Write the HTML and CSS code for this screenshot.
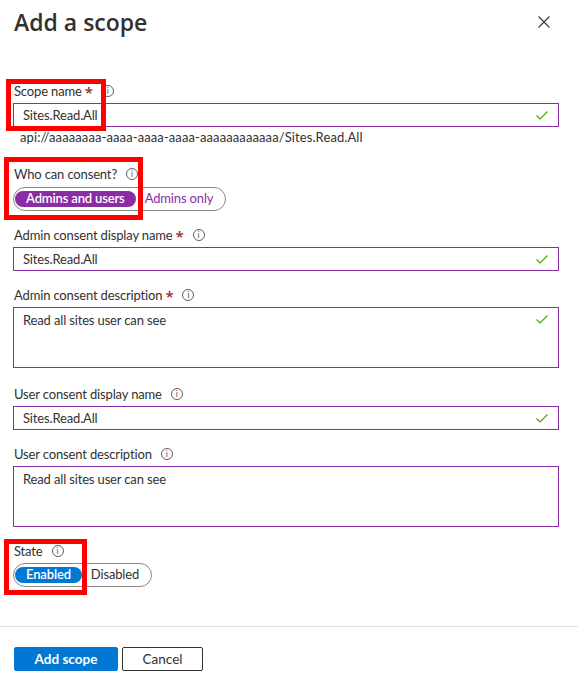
FILE: index.html
```html
<!DOCTYPE html>
<html lang="en">
<head>
<meta charset="utf-8">
<title>Add a scope</title>
<link rel="stylesheet" href="styles.css">
</head>
<body>
<div class="blade">
  <header class="blade-header">
    <h1 class="blade-title">Add a scope</h1>
    <button class="close-btn" aria-label="Close">
      <svg width="12" height="12" viewBox="0 0 12 12"><path d="M0.5 0.5 L11.5 11.5 M11.5 0.5 L0.5 11.5" stroke="#323130" stroke-width="1.1" fill="none"/></svg>
    </button>
  </header>

  <div class="blade-content">
    <div class="field field-scope">
      <div class="label">Scope name <span class="req">*</span><span class="info">i</span></div>
      <div class="input"><span class="value">Sites.Read.All</span><svg class="check" width="12" height="9" viewBox="0 0 12 9"><path d="M0.5 4.5 L4 8 L11.5 0.5" stroke="#57a300" stroke-width="1.2" fill="none"/></svg></div>
      <div class="hint">api://aaaaaaaa-aaaa-aaaa-aaaa-aaaaaaaaaaaa/Sites.Read.All</div>
      <div class="annot annot-scope"></div>
    </div>

    <div class="field field-consent">
      <div class="label">Who can consent? <span class="info">i</span></div>
      <div class="toggle">
        <span class="opt opt-on purple">Admins and users</span><span class="opt opt-off purple-text">Admins only</span>
      </div>
      <div class="annot annot-consent"></div>
    </div>

    <div class="field">
      <div class="label">Admin consent display name <span class="req">*</span><span class="info">i</span></div>
      <div class="input"><span class="value">Sites.Read.All</span><svg class="check" width="12" height="9" viewBox="0 0 12 9"><path d="M0.5 4.5 L4 8 L11.5 0.5" stroke="#57a300" stroke-width="1.2" fill="none"/></svg></div>
    </div>

    <div class="field field-area">
      <div class="label">Admin consent description <span class="req">*</span><span class="info">i</span></div>
      <div class="textarea"><span class="value">Read all sites user can see</span><svg class="check" width="12" height="9" viewBox="0 0 12 9"><path d="M0.5 4.5 L4 8 L11.5 0.5" stroke="#57a300" stroke-width="1.2" fill="none"/></svg></div>
    </div>

    <div class="field">
      <div class="label">User consent display name <span class="info">i</span></div>
      <div class="input"><span class="value">Sites.Read.All</span><svg class="check" width="12" height="9" viewBox="0 0 12 9"><path d="M0.5 4.5 L4 8 L11.5 0.5" stroke="#57a300" stroke-width="1.2" fill="none"/></svg></div>
    </div>

    <div class="field">
      <div class="label">User consent description <span class="info">i</span></div>
      <div class="textarea"><span class="value">Read all sites user can see</span></div>
    </div>

    <div class="field field-state">
      <div class="label">State <span class="info">i</span></div>
      <div class="toggle">
        <span class="opt opt-on blue">Enabled</span><span class="opt opt-off">Disabled</span>
      </div>
      <div class="annot annot-state"></div>
    </div>
  </div>

  <footer class="blade-footer">
    <button class="btn btn-primary">Add scope</button>
    <button class="btn btn-secondary">Cancel</button>
  </footer>
</div>
</body>
</html>
```

FILE: styles.css
```css
* { box-sizing: border-box; }
html, body { margin: 0; padding: 0; background: #fff; }
body {
  font-family: "Segoe UI", Lato, "Open Sans", sans-serif;
  font-size: 13px;
  letter-spacing: -0.15px;
  color: #323130;
  width: 578px;
  height: 688px;
  overflow: hidden;
}
.blade { display: flex; flex-direction: column; height: 688px; }
.blade-header {
  display: flex;
  align-items: center;
  justify-content: space-between;
  padding: 4px 28px 0 14px;
  height: 40px;
}
.blade-title {
  margin: 0;
  font-family: "Segoe UI", "Open Sans", sans-serif;
  font-size: 23px;
  font-weight: 600;
  letter-spacing: 0;
  color: #323130;
  line-height: 32px;
}
.close-btn {
  border: 0; background: none; padding: 0; width: 12px; height: 12px; display: flex;
}
.blade-content {
  flex: 1;
  padding: 41px 19px 0 13px;
  display: flex;
  flex-direction: column;
}
.field { position: relative; display: flex; flex-direction: column; margin-bottom: 14px; }
.field-area { margin-bottom: 16px; }
.label {
  display: flex; align-items: center;
  height: 20px; line-height: 20px;
  margin-bottom: 2px;
  padding-left: 1px;
  white-space: nowrap;
}
.req {
  color: #a4262c; margin-left: 3px;
  font-family: "Open Sans", sans-serif; font-size: 15px; font-weight: 600;
  line-height: 20px; position: relative; top: 1px;
}
.info {
  display: inline-flex; align-items: center; justify-content: center;
  width: 12px; height: 12px;
  margin-left: 9px;
  border: 1px solid #605e5c; border-radius: 50%;
  font-size: 9px; line-height: 1; color: #605e5c; letter-spacing: 0;
  font-family: "DejaVu Sans", sans-serif;
}
.input, .textarea {
  display: flex; justify-content: space-between;
  border: 1px solid #8a2da5;
  padding: 0 10px 0 9px;
  background: #fff;
}
.input { height: 24px; align-items: center; }
.textarea { height: 61px; align-items: flex-start; padding-top: 2px; }
.textarea .check { margin-top: 5px; }
.value { line-height: 20px; }
.hint { padding-left: 7px; line-height: 16px; margin-top: 2px; color: #323130; letter-spacing: 0.1px; }
.field-scope { margin-bottom: 19px; }
.field-consent .label { margin-bottom: 3px; }
.toggle {
  align-self: flex-start;
  display: flex; align-items: center;
  height: 24px;
  border: 1px solid #8a8886; border-radius: 12px;
  padding: 0 1px;
}
.opt { height: 16px; line-height: 15px; border-radius: 8px; padding: 0 11px; white-space: nowrap; }
.opt-on { color: #fff; font-weight: 600; }
.purple { background: #8a2da5; }
.blue { background: #0078d4; }
.purple-text { color: #8a2da5; }
.opt-off { padding: 0 11px 0 9px; }
.annot {
  position: absolute;
  border: 5px solid #ff0000;
  pointer-events: none;
}
.annot-scope { left: -7px; top: -2px; width: 100px; height: 52px; }
.annot-consent { left: -9px; top: -7px; width: 139px; height: 63px; }
.annot-state { left: -9px; top: -2px; width: 83px; height: 56px; }
.blade-footer {
  border-top: 1px solid #e1dfdd;
  height: 62px;
  padding: 20px 14px 0 14px;
  display: flex; gap: 4px;
  align-items: flex-start;
}
.btn {
  height: 24px; font-family: inherit; font-size: 13.5px; padding: 0;
  border-radius: 2px; cursor: pointer;
}
.btn-primary { width: 104px; background: #0078d4; color: #fff; border: 1px solid #0078d4; font-weight: 700; }
.btn-secondary { width: 81px; background: #fff; color: #323130; border: 1px solid #323130; }
```
